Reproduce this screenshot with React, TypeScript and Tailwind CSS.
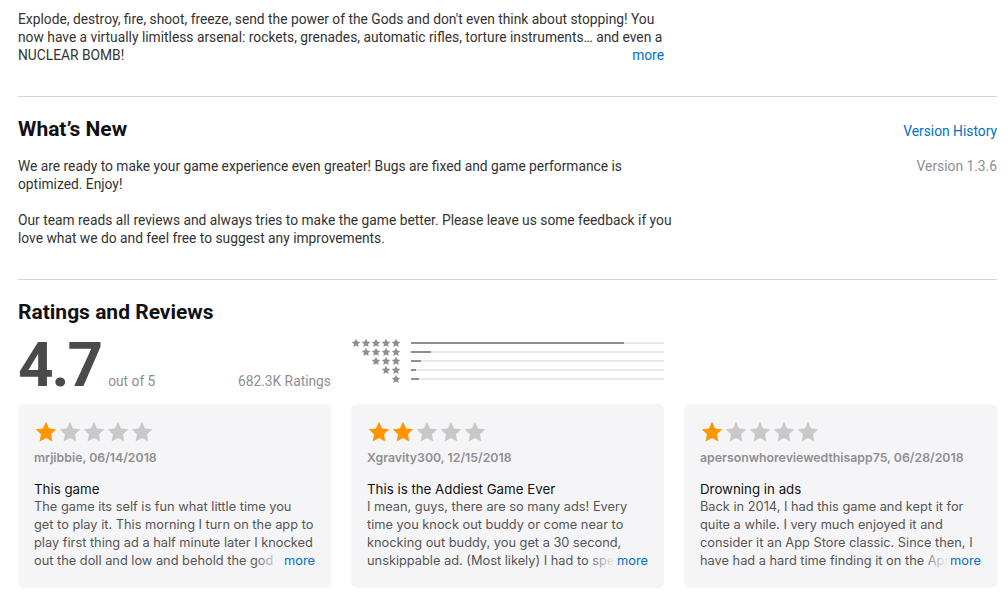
import React from 'react';

const STAR_PATH = 'M12 1.8l3.1 6.6 7.2.9-5.3 5 1.4 7.1L12 17.9l-6.4 3.5 1.4-7.1-5.3-5 7.2-.9z';

function Star({ filled, size = 24, color }: { filled: boolean; size?: number; color?: string }) {
  return (
    <svg width={size} height={size} viewBox="0 0 24 24" className="shrink-0">
      <path d={STAR_PATH} fill={color ?? (filled ? '#ff9500' : '#c8c8c8')} />
    </svg>
  );
}

const HISTOGRAM = [
  { stars: 5, pct: 84 },
  { stars: 4, pct: 8 },
  { stars: 3, pct: 4 },
  { stars: 2, pct: 2 },
  { stars: 1, pct: 3 },
];

// lines kept as the store wraps them
const REVIEWS = [
  {
    rating: 1,
    author: 'mrjibbie, 06/14/2018',
    title: 'This game',
    lines: [
      'The game its self is fun what little time you',
      'get to play it. This morning I turn on the app to',
      'play first thing ad a half minute later I knocked',
      'out the doll and low and behold the god',
    ],
  },
  {
    rating: 2,
    author: 'Xgravity300, 12/15/2018',
    title: 'This is the Addiest Game Ever',
    lines: [
      'I mean, guys, there are so many ads! Every',
      'time you knock out buddy or come near to',
      'knocking out buddy, you get a 30 second,',
      'unskippable ad. (Most likely) I had to spend',
    ],
  },
  {
    rating: 1,
    author: 'apersonwhoreviewedthisapp75, 06/28/2018',
    title: 'Drowning in ads',
    lines: [
      'Back in 2014, I had this game and kept it for',
      'quite a while. I very much enjoyed it and',
      'consider it an App Store classic. Since then, I',
      'have had a hard time finding it on the App Store',
    ],
  },
];

function ReviewCard({ review }: { review: (typeof REVIEWS)[number] }) {
  return (
    <div className="bg-[#f5f5f7] rounded-[6px] pl-4 pr-[16px] pt-[16px] h-[184px] overflow-hidden font-['Inter',sans-serif]">
      <div className="flex">
        {[1, 2, 3, 4, 5].map((i) => (
          <Star key={i} filled={i <= review.rating} />
        ))}
      </div>
      <div className="mt-[5px] text-[12.3px] leading-[18px] font-semibold text-[#8e8e93]">{review.author}</div>
      <div className="mt-[13px] text-[13.3px] leading-[18px] text-[#111]">{review.title}</div>
      <div className="relative text-[12.8px] leading-[18px] text-[#555] h-[72px] overflow-hidden">
        {review.lines.map((l, i) => (
          <div key={i} className="whitespace-nowrap">{l}</div>
        ))}
        <span className="absolute right-0 bottom-0 flex">
          <span className="w-[28px] bg-gradient-to-r from-[#f5f5f7]/0 to-[#f5f5f7]" />
          <span className="bg-[#f5f5f7] pl-[2px] text-[#0070c9]">more</span>
        </span>
      </div>
    </div>
  );
}

export default function App() {
  return (
    <div className="w-[1008px] h-[592px] overflow-hidden bg-white font-['Roboto',sans-serif] text-[#333]">
      <div className="pl-[18px] pr-[11px]">
        {/* description */}
        <div className="w-[646px] pt-[10px] pb-[32px] text-[13.8px] leading-[18px] text-[#333]">
          <p className="w-[680px]">
            Explode, destroy, fire, shoot, freeze, send the power of the Gods and don't even think about stopping! You
            <br />
            now have a virtually limitless arsenal: rockets, grenades, automatic rifles, torture instruments… and even a
            <br />
            NUCLEAR BOMB!
          </p>
          <div className="flex justify-end -mt-[18px]">
            <span className="text-[#0070c9]">more</span>
          </div>
        </div>

        <div className="border-t border-[#d6d6d6]" />

        {/* What's New */}
        <div className="pt-[20px] pb-[32px]">
          <div className="flex items-baseline justify-between">
            <h2 className="text-[21px] leading-[24px] font-bold text-[#111]">What’s New</h2>
            <span className="text-[13.8px] text-[#0070c9]">Version History</span>
          </div>
          <div className="flex justify-between mt-[15px] text-[13.8px] leading-[18px]">
            <div className="w-[680px] space-y-[18px]">
              <p>
                We are ready to make your game experience even greater! Bugs are fixed and game performance is
                <br />
                optimized. Enjoy!
              </p>
              <p>
                Our team reads all reviews and always tries to make the game better. Please leave us some feedback if you
                <br />
                love what we do and feel free to suggest any improvements.
              </p>
            </div>
            <span className="text-[#8e8e93]">Version 1.3.6</span>
          </div>
        </div>

        <div className="border-t border-[#d6d6d6]" />

        {/* Ratings */}
        <div className="pt-[20px]">
          <h2 className="text-[21px] leading-[24px] font-bold text-[#111]">Ratings and Reviews</h2>
          <div className="flex items-end mt-[11px] h-[54px]">
            <div className="w-[313px] flex items-end justify-between">
              <div className="flex items-end">
                <span className="text-[62px] leading-[48px] font-bold text-[#4a4a4d] tracking-[-2px]">4.7</span>
                <span className="ml-[7px] text-[13.8px] leading-[16px] text-[#8e8e93]">out of 5</span>
              </div>
              <span className="text-[13.8px] leading-[16px] text-[#8e8e93]">682.3K Ratings</span>
            </div>
            <div className="ml-[20px] w-[313px] self-start pt-[4px]">
              {HISTOGRAM.map((row) => (
                <div key={row.stars} className="flex items-center h-[9px]">
                  <div className="w-[50px] flex justify-end">
                    {Array.from({ length: row.stars }).map((_, i) => (
                      <Star key={i} filled size={10} color="#8e8e93" />
                    ))}
                  </div>
                  <div className="ml-[10px] flex-1 h-[2px] bg-[#e8e8ed] relative">
                    <div className="h-[2px] bg-[#8e8e93]" style={{ width: `${row.pct}%` }} />
                  </div>
                </div>
              ))}
            </div>
          </div>

          <div className="grid grid-cols-3 gap-[20px] mt-[15px]">
            {REVIEWS.map((r) => (
              <ReviewCard key={r.author} review={r} />
            ))}
          </div>
        </div>
      </div>
    </div>
  );
}
